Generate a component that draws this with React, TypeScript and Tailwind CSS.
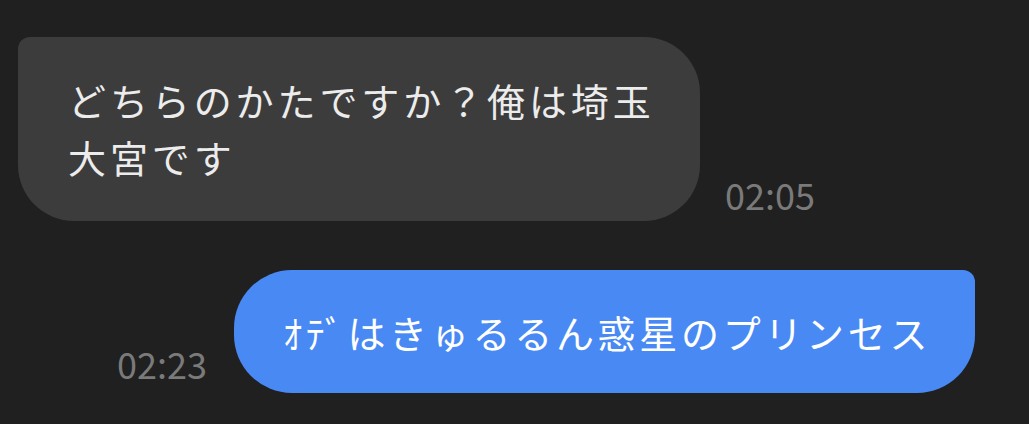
const messages = [
  { id: 1, mine: false, lines: ['どちらのかたですか？俺は埼玉', '大宮です'], time: '02:05' },
  { id: 2, mine: true, lines: ['ｵﾃﾞはきゅるるん惑星のプリンセス'], time: '02:23' },
];

const font = { fontFamily: '"Noto Sans CJK JP", "Noto Sans", sans-serif' };

export default function App() {
  return (
    <div className="min-h-[424px] w-full bg-[#202020] pt-[37px]" style={font}>
      <div className="flex flex-col gap-[49px]">
        {messages.map((m) =>
          m.mine ? (
            <div key={m.id} className="flex items-end justify-end gap-[27px] pr-[54px]">
              <span className="mb-[12px] text-[36px] leading-none text-[#7a7a7a]">{m.time}</span>
              <div className="w-[741px] whitespace-nowrap rounded-[58px] rounded-tr-[12px] bg-[#4889f4] py-[33px] pl-[49px] text-[38px] leading-[57px] tracking-[3.7px] text-white">
                {m.lines[0]}
              </div>
            </div>
          ) : (
            <div key={m.id} className="flex items-end gap-[25px] pl-[18px]">
              <div className="w-[682px] rounded-[56px] rounded-tl-[12px] bg-[#3c3c3c] pb-[36px] pl-[50px] pr-[20px] pt-[34px] text-[38px] leading-[57px] tracking-[3.9px] text-[#ececec]">
                {m.lines[0]}
                <br />
                {m.lines[1]}
              </div>
              <span className="mb-[9px] text-[36px] leading-none text-[#7a7a7a]">{m.time}</span>
            </div>
          )
        )}
      </div>
    </div>
  );
}
